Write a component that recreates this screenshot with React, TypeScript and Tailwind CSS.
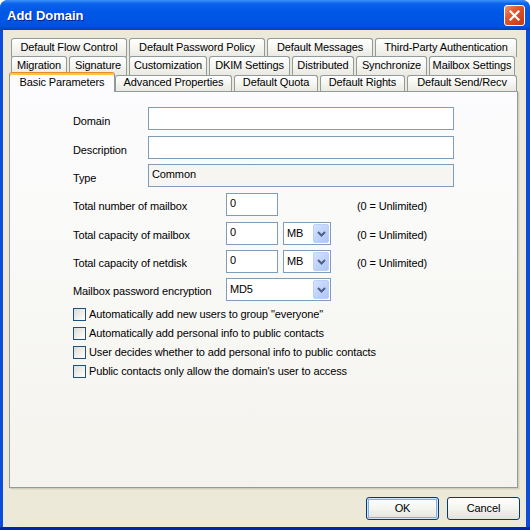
import React from "react";

type TabProps = { label: string; w: string; className?: string };

function Tab({ label, w, className = "" }: TabProps) {
  return (
    <div
      className={`${w} ${className} flex shrink-0 items-start justify-center rounded-t-[3px] border border-b-0 border-[#919B9C] bg-[linear-gradient(180deg,#FFFFFF_0%,#F6F6F3_45%,#EAE9E2_100%)] text-[11px] leading-[13px] text-black whitespace-nowrap`}
    >
      {label}
    </div>
  );
}

function Chevron() {
  return (
    <svg width="9" height="6" viewBox="0 0 9 6">
      <path d="M1 1 L4.5 4.5 L8 1" fill="none" stroke="#4D6185" strokeWidth="2" />
    </svg>
  );
}

function Select({ value, w }: { value: string; w: string }) {
  return (
    <div className={`${w} flex h-[23px] shrink-0 border border-[#7F9DB9] bg-white p-[1px]`}>
      <div className="flex flex-1 items-center pl-[2px] pb-[1px] text-[11px]">{value}</div>
      <div className="flex w-[16px] items-center justify-center rounded-[2px] border border-[#BAD0FC] bg-[linear-gradient(135deg,#D6E3FE_0%,#C1D3FB_50%,#AFC5F5_100%)]">
        <Chevron />
      </div>
    </div>
  );
}

function TextBox({ w, value = "", disabled = false }: { w: string; value?: string; disabled?: boolean }) {
  return (
    <div
      className={`${w} flex h-[23px] shrink-0 items-center border border-[#7F9DB9] pl-[3px] pb-[2px] text-[11px] ${
        disabled ? "bg-[#F6F5F1]" : "bg-white"
      }`}
    >
      {value}
    </div>
  );
}

function Check({ label }: { label: string }) {
  return (
    <div className="flex h-[19px] items-center gap-[3px]">
      <div className="h-[13px] w-[13px] shrink-0 border border-[#1C5180] bg-[linear-gradient(135deg,#DCDBD5_0%,#F2F1EC_60%,#FFFFFF_100%)]" />
      <span className="text-[11px] leading-none">{label}</span>
    </div>
  );
}

function XpButton({ label, isDefault = false }: { label: string; isDefault?: boolean }) {
  return (
    <div
      className={`flex h-[23px] w-[73px] items-center justify-center rounded-[3px] border border-[#003C74] bg-[linear-gradient(180deg,#FFFFFF_0%,#F4F4F0_50%,#E3E2DA_100%)] text-[11px] ${
        isDefault ? "shadow-[inset_0_0_0_1px_#CEE7FF,inset_0_0_0_2px_#89ADE4]" : ""
      }`}
    >
      {label}
    </div>
  );
}

export default function App() {
  return (
    <div className="flex h-[530px] w-[530px] flex-col overflow-hidden rounded-t-[8px] bg-[#0B4CDC] font-['Liberation_Sans',Arial,sans-serif] tracking-[-0.12px] text-black">
      {/* title bar */}
      <div className="flex h-[30px] shrink-0 items-center justify-between bg-[linear-gradient(180deg,#3D93F8_0%,#0C63EC_12%,#0058E6_35%,#0055E4_70%,#0151DE_88%,#003FC2_100%)] pl-[7px] pr-[5px]">
        <span className="pt-[2px] text-[13px] font-bold tracking-normal text-white [text-shadow:1px_1px_0_#0B1F8F]">Add Domain</span>
        <div className="flex h-[21px] w-[21px] items-center justify-center rounded-[3px] border border-white bg-[linear-gradient(135deg,#F09478_0%,#E25A33_35%,#D2451F_70%,#C0381A_100%)]">
          <svg width="11" height="11" viewBox="0 0 11 11">
            <path d="M1.5 1.5 L9.5 9.5 M9.5 1.5 L1.5 9.5" stroke="white" strokeWidth="2.2" strokeLinecap="square" />
          </svg>
        </div>
      </div>

      {/* body */}
      <div className="ml-[3px] mr-[4px] flex flex-1 flex-col bg-[#ECE9D8] pl-[6px] pt-[8px]">
        <div className="flex h-[18px] gap-[2px] pl-[2px]">
          <Tab label="Default Flow Control" w="w-[116px] h-[19px] pt-[2px]" />
          <Tab label="Default Password Policy" w="w-[136px] h-[19px] pt-[2px]" />
          <Tab label="Default Messages" w="w-[106px] h-[19px] pt-[2px]" />
          <Tab label="Third-Party Authentication" w="w-[142px] h-[19px] pt-[2px]" />
        </div>
        <div className="flex h-[16px] gap-[2px] pl-[2px]">
          <Tab label="Migration" w="w-[56px] h-[19px] pt-[2px]" />
          <Tab label="Signature" w="w-[58px] h-[19px] pt-[2px]" />
          <Tab label="Customization" w="w-[78px] h-[19px] pt-[2px]" />
          <Tab label="DKIM Settings" w="w-[81px] h-[19px] pt-[2px]" />
          <Tab label="Distributed" w="w-[62px] h-[19px] pt-[2px]" />
          <Tab label="Synchronize" w="w-[71px] h-[19px] pt-[2px]" />
          <Tab label="Mailbox Settings" w="w-[86px] h-[19px] pt-[2px]" />
        </div>
        <div className="flex h-[19px] items-end">
          <div className="relative z-10 -mb-px flex h-[20px] w-[106px] shrink-0 justify-center rounded-t-[3px] border border-b-0 border-[#919B9C] border-t-[#E68B2C] bg-[#FCFCFE] pt-[3px] text-[11px] leading-[13px] shadow-[inset_0_2px_0_#FFC83C]">
            Basic Parameters
          </div>
          <Tab label="Advanced Properties" w="w-[117px] h-[16px]" className="pt-0" />
          <Tab label="Default Quota" w="w-[84px] h-[16px]" className="ml-[2px] pt-0" />
          <Tab label="Default Rights" w="w-[85px] h-[16px]" className="ml-[2px] pt-0" />
          <Tab label="Default Send/Recv" w="w-[110px] h-[16px]" className="ml-[2px] pt-0" />
        </div>

        {/* panel */}
        <div className="flex h-[397px] w-[509px] flex-col border border-[#919B9C] bg-[linear-gradient(180deg,#FCFCFE_0%,#F9F9F7_40%,#F4F3EE_100%)] pl-[63px] pt-[15px] shadow-[1px_1px_0_#D0CEBF,2px_2px_0_#E0DDCE] text-[11px]">
          <div className="flex h-[23px] items-center">
            <span className="w-[75px] pt-[5px]">Domain</span>
            <TextBox w="w-[306px]" />
          </div>
          <div className="mt-[6px] flex h-[23px] items-center">
            <span className="w-[75px] pt-[5px]">Description</span>
            <TextBox w="w-[306px]" />
          </div>
          <div className="mt-[5px] flex h-[23px] items-center">
            <span className="w-[75px] pt-[5px]">Type</span>
            <TextBox w="w-[306px]" value="Common" disabled />
          </div>

          <div className="mt-[6px] flex h-[23px] items-center">
            <span className="w-[153px] pt-[4px]">Total number of mailbox</span>
            <div className="flex w-[131px] shrink-0">
              <TextBox w="w-[52px]" value="0" />
            </div>
            <span className="pt-[4px]">(0 = Unlimited)</span>
          </div>
          <div className="mt-[6px] flex h-[23px] items-center">
            <span className="w-[153px] pt-[4px]">Total capacity of mailbox</span>
            <div className="flex w-[131px] shrink-0 gap-[5px]">
              <TextBox w="w-[52px]" value="0" />
              <Select w="w-[48px]" value="MB" />
            </div>
            <span className="pt-[4px]">(0 = Unlimited)</span>
          </div>
          <div className="mt-[5px] flex h-[23px] items-center">
            <span className="w-[153px] pt-[4px]">Total capacity of netdisk</span>
            <div className="flex w-[131px] shrink-0 gap-[5px]">
              <TextBox w="w-[52px]" value="0" />
              <Select w="w-[48px]" value="MB" />
            </div>
            <span className="pt-[4px]">(0 = Unlimited)</span>
          </div>
          <div className="mt-[5px] flex h-[23px] items-center">
            <span className="w-[153px] pt-[3px]">Mailbox password encryption</span>
            <Select w="w-[105px]" value="MD5" />
          </div>

          <div className="mt-[4px] flex flex-col">
            <Check label={'Automatically add new users to group "everyone"'} />
            <Check label="Automatically add personal info to public contacts" />
            <Check label="User decides whether to add personal info to public contacts" />
            <Check label="Public contacts only allow the domain's user to access" />
          </div>
        </div>

        <div className="mt-[9px] flex justify-end gap-[8px] pr-[6px]">
          <XpButton label="OK" isDefault />
          <XpButton label="Cancel" />
        </div>
      </div>
      <div className="h-[3px] shrink-0 bg-[#0026B0]" />
    </div>
  );
}
